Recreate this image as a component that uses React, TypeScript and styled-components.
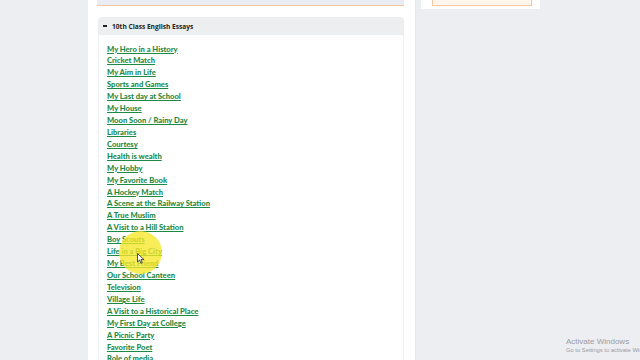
import React from 'react';
import styled, { createGlobalStyle } from 'styled-components';

const GlobalStyle = createGlobalStyle`
  html, body {
    margin: 0;
    padding: 0;
    background: #eceef2;
    font-family: Lato, 'Open Sans', 'Liberation Sans', sans-serif;
    overflow: hidden;
  }
`;

const Page = styled.div`
  display: flex;
  align-items: flex-start;
  width: 640px;
  height: 360px;
  padding-left: 88px;
  box-sizing: border-box;
  gap: 5px;
`;

const MainCard = styled.div`
  width: 328px;
  height: 360px;
  background: #ffffff;
  padding: 0 11px 0 9px;
  box-sizing: border-box;
  border-right: 1px solid #e6e7ea;
`;

const PrevBlock = styled.div`
  height: 5px;
  background: #eaedf3;
  border-bottom: 1px solid #f6c59a;
`;

const Accordion = styled.div`
  margin-top: 11px;
  margin-left: 1px;
`;

const Header = styled.div`
  display: flex;
  align-items: center;
  gap: 5px;
  height: 18px;
  padding-left: 5px;
  background: #eceef0;
  border-radius: 4px 4px 0 0;
  font-family: 'Open Sans', sans-serif;
  font-size: 6.6px;
  font-weight: 700;
  color: #222;
`;

const Minus = styled.span`
  display: block;
  width: 4px;
  height: 1.4px;
  background: #222;
`;

const Body = styled.div`
  border-left: 1px solid #eeeff1;
  border-right: 1px solid #eeeff1;
  padding: 4.5px 0 0 8px;
  height: 340px;
`;

const List = styled.ul`
  list-style: none;
  margin: 0;
  padding: 0;
`;

const Item = styled.li`
  height: 11.93px;
  line-height: 11.93px;
`;

const EssayLink = styled.a`
  font-size: 7.6px;
  font-weight: 900;
  color: #1c8a45;
  text-decoration: underline;
  text-underline-offset: 1px;
`;

const Sidebar = styled.div`
  width: 119px;
  height: 9px;
  background: #ffffff;
  padding: 0 8px 0 11px;
  box-sizing: border-box;
`;

const OrangeBox = styled.div`
  height: 6px;
  background: #fff6ee;
  border: 1px solid #f7c8a0;
  border-top: none;
  box-sizing: border-box;
`;

const Highlight = styled.div`
  position: absolute;
  left: 119px;
  top: 231px;
  width: 43px;
  height: 43px;
  border-radius: 50%;
  background: rgba(246, 232, 40, 0.78);
  pointer-events: none;
`;

const Cursor = styled.svg`
  position: absolute;
  left: 137px;
  top: 253px;
`;

const Watermark = styled.div`
  position: absolute;
  left: 566px;
  top: 337px;
  color: #9a9ca3;
  font-family: 'Liberation Sans', sans-serif;
`;

const WmTitle = styled.div`
  font-size: 8px;
`;

const WmSub = styled.div`
  font-size: 5.8px;
  margin-top: 1px;
  white-space: nowrap;
`;

const essays = [
  'My Hero in a History',
  'Cricket Match',
  'My Aim in Life',
  'Sports and Games',
  'My Last day at School',
  'My House',
  'Moon Soon / Rainy Day',
  'Libraries',
  'Courtesy',
  'Health is wealth',
  'My Hobby',
  'My Favorite Book',
  'A Hockey Match',
  'A Scene at the Railway Station',
  'A True Muslim',
  'A Visit to a Hill Station',
  'Boy Scouts',
  'Life in a Big City',
  'My Best Friend',
  'Our School Canteen',
  'Television',
  'Village Life',
  'A Visit to a Historical Place',
  'My First Day at College',
  'A Picnic Party',
  'Favorite Poet',
  'Role of media',
];

export default function App() {
  return (
    <>
      <GlobalStyle />
      <Page>
        <MainCard>
          <PrevBlock />
          <Accordion>
            <Header>
              <Minus />
              10th Class English Essays
            </Header>
            <Body>
              <List>
                {essays.map((e) => (
                  <Item key={e}>
                    <EssayLink href="#">{e}</EssayLink>
                  </Item>
                ))}
              </List>
            </Body>
          </Accordion>
        </MainCard>
        <Sidebar>
          <OrangeBox />
        </Sidebar>
      </Page>
      <Highlight />
      <Cursor width="8" height="11" viewBox="0 0 8 11">
        <path d="M0.5 0.5 L0.5 9 L2.6 7 L4 10.3 L5.3 9.7 L4 6.6 L7 6.6 Z" fill="#fff" stroke="#222" strokeWidth="0.8" />
      </Cursor>
      <Watermark>
        <WmTitle>Activate Windows</WmTitle>
        <WmSub>Go to Settings to activate Windows.</WmSub>
      </Watermark>
    </>
  );
}
